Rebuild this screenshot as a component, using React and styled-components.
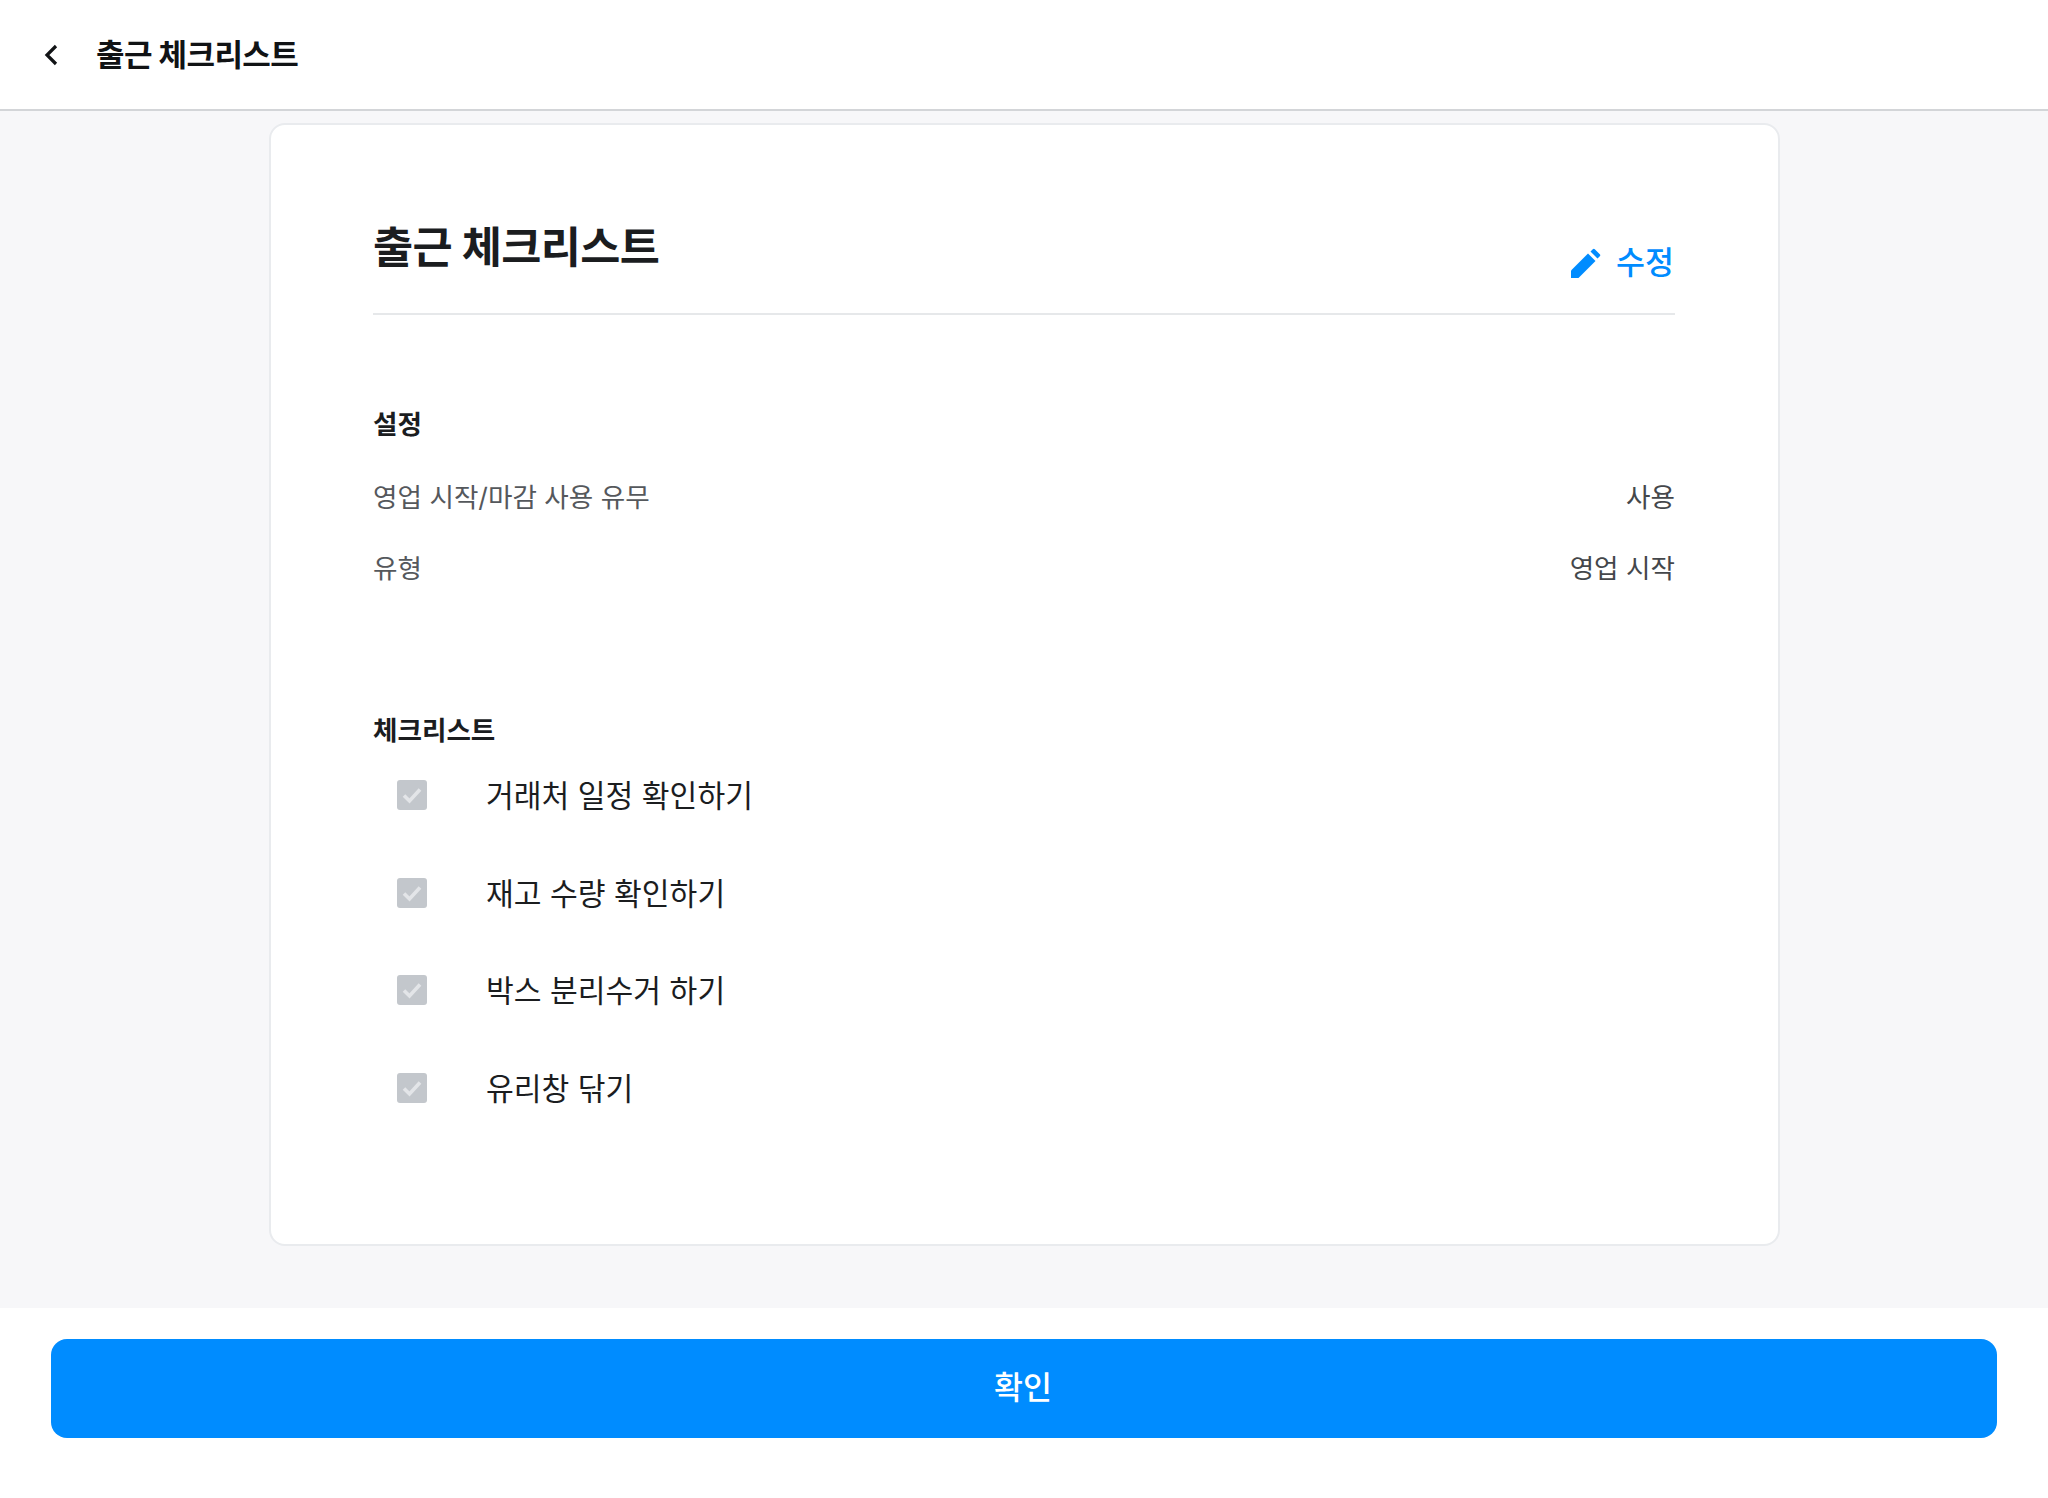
import React from "react";
import styled, { createGlobalStyle } from "styled-components";

const GlobalStyle = createGlobalStyle`
  html, body {
    margin: 0;
    padding: 0;
    background: #fff;
    font-family: "Inter", "Noto Sans CJK KR", sans-serif;
    color: #1b1d1f;
  }
  * { box-sizing: border-box; }
`;

const Page = styled.div`
  display: flex;
  flex-direction: column;
  height: 1498px;
  background: #f7f7f9;
`;

const Header = styled.header`
  display: flex;
  align-items: center;
  height: 111px;
  padding: 0 0 0 42px;
  gap: 34px;
  flex-shrink: 0;
  background: #fff;
  border-bottom: 2px solid #d3d5d8;
`;

const HeaderTitle = styled.h1`
  margin: 0;
  font-size: 31px;
  line-height: 40px;
  font-weight: 700;
  letter-spacing: -0.6px;
  color: #111315;
`;

const Main = styled.main`
  flex: 1;
  display: flex;
  justify-content: center;
  padding-top: 12px;
`;

const Card = styled.section`
  width: 1511px;
  height: 1123px;
  margin-left: 1px;
  padding: 90px 103px 0 102px;
  background: #fff;
  border: 2px solid #e9ebee;
  border-radius: 16px;
`;

const TitleRow = styled.div`
  display: flex;
  justify-content: space-between;
  align-items: flex-end;
  height: 100px;
  padding-bottom: 30px;
  border-bottom: 2px solid #e6e8ea;
`;

const Title = styled.h2`
  margin: 0 0 6px;
  font-size: 43.6px;
  line-height: 58px;
  font-weight: 700;
  letter-spacing: -0.6px;
`;

const EditButton = styled.button`
  display: flex;
  align-items: center;
  gap: 15px;
  padding: 0 1px 0 0;
  border: 0;
  background: none;
  font: inherit;
  font-size: 31.5px;
  line-height: 40px;
  font-weight: 500;
  color: #008cff;
`;

const Section = styled.div`
  margin-top: ${(p) => p.$top}px;
`;

const SectionTitle = styled.h3`
  margin: 0;
  font-size: 26.6px;
  line-height: 35px;
  font-weight: 700;
  color: #1b1d1f;
`;

const InfoRow = styled.div`
  display: flex;
  justify-content: space-between;
  align-items: center;
  height: 36px;
  margin-top: 35px;
  font-size: 26.6px;
  color: #55585c;
`;

const InfoValue = styled.span`
  color: #44474b;
`;

const List = styled.ul`
  display: flex;
  flex-direction: column;
  gap: 57.5px;
  margin: 26px 0 0;
  padding: 0 0 0 24px;
  list-style: none;
`;

const Item = styled.li`
  display: flex;
  align-items: center;
  gap: 59px;
  height: 40px;
  font-size: 30.2px;
  color: #1b1d1f;
`;

const Check = styled.span`
  display: flex;
  align-items: center;
  justify-content: center;
  width: 30px;
  height: 30px;
  margin-top: 2px;
  border-radius: 3px;
  background: #c3c7cc;
`;

const Footer = styled.footer`
  flex-shrink: 0;
  height: 190px;
  padding: 31px 51px 0;
  background: #fff;
`;

const Confirm = styled.button`
  display: block;
  width: 100%;
  height: 99px;
  padding: 0 2px 8px 0;
  border: 0;
  border-radius: 16px;
  background: #008cff;
  color: #fff;
  font: inherit;
  font-size: 31.5px;
  font-weight: 500;
`;

const items = [
  "거래처 일정 확인하기",
  "재고 수량 확인하기",
  "박스 분리수거 하기",
  "유리창 닦기",
];

const App = () => {
  return (
    <>
      <GlobalStyle />
      <Page>
        <Header>
          <svg width="20" height="24" viewBox="0 0 20 24" fill="none">
            <path d="M14 3 L5 12 L14 21" stroke="#111315" strokeWidth="3.2" />
          </svg>
          <HeaderTitle>출근 체크리스트</HeaderTitle>
        </Header>
        <Main>
          <Card>
            <TitleRow>
              <Title>출근 체크리스트</Title>
              <EditButton>
                <svg width="30" height="30" viewBox="0 0 30 30" fill="#008cff">
                  <path d="M0 30 V22.5 L17 5.5 L24.5 13 L7.5 30 Z" />
                  <path d="M19.5 3.5 L21.8 1.2 a1.4 1.4 0 0 1 2 0 L28.8 6.2 a1.4 1.4 0 0 1 0 2 L26.5 10.5 Z" />
                </svg>
                수정
              </EditButton>
            </TitleRow>
            <Section $top={92}>
              <SectionTitle>설정</SectionTitle>
              <InfoRow>
                <span>영업 시작/마감 사용 유무</span>
                <InfoValue>사용</InfoValue>
              </InfoRow>
              <InfoRow>
                <span>유형</span>
                <InfoValue>영업 시작</InfoValue>
              </InfoRow>
            </Section>
            <Section $top={129}>
              <SectionTitle>체크리스트</SectionTitle>
              <List>
                {items.map((item) => (
                  <Item key={item}>
                    <Check>
                      <svg width="22" height="22" viewBox="0 0 22 22" fill="none">
                        <path d="M3 11.5 L8.5 17 L19 5.5" stroke="#e3e5e8" strokeWidth="3.6" />
                      </svg>
                    </Check>
                    {item}
                  </Item>
                ))}
              </List>
            </Section>
          </Card>
        </Main>
        <Footer>
          <Confirm>확인</Confirm>
        </Footer>
      </Page>
    </>
  );
};

export default App;
